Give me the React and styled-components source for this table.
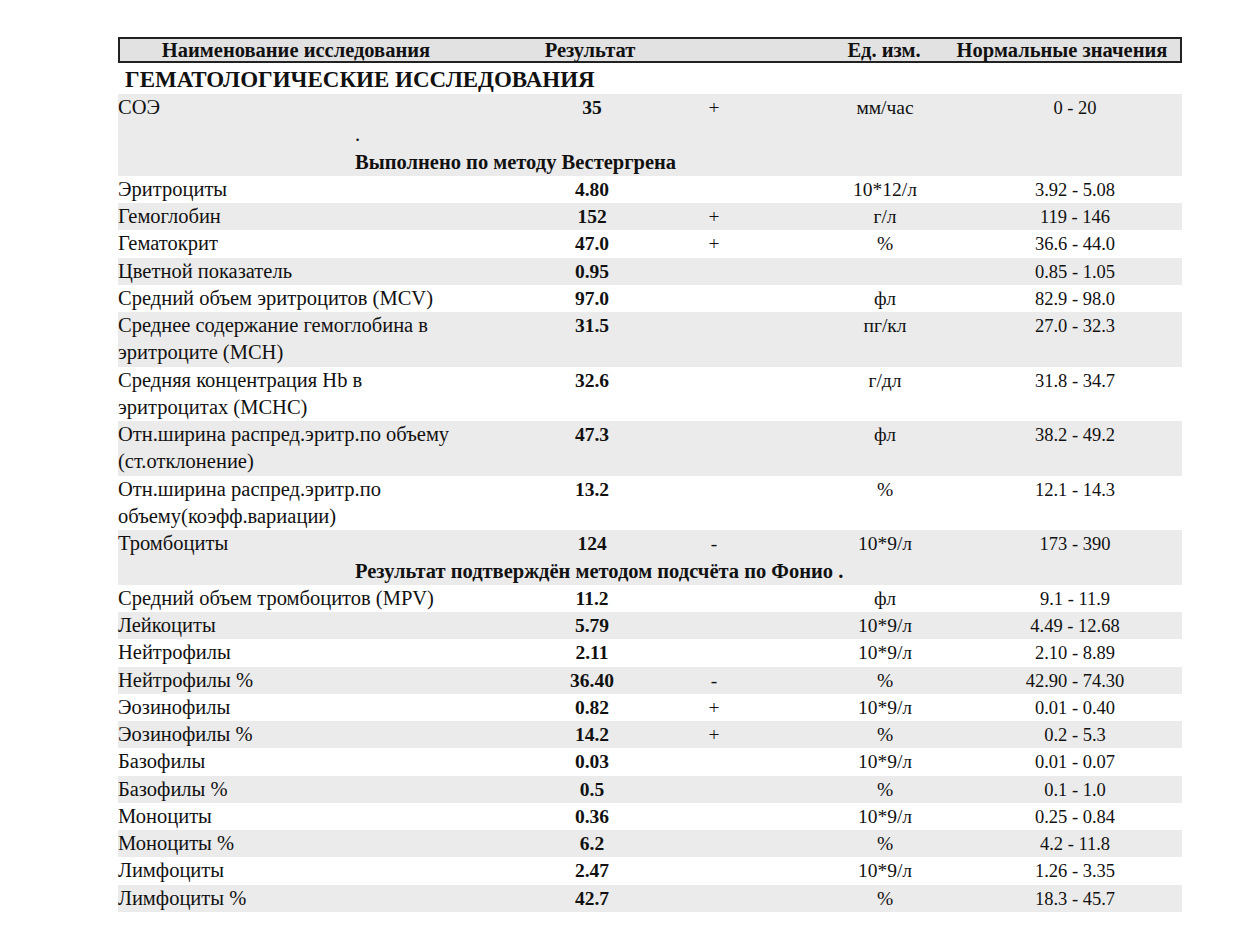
import React from "react";
import styled, { createGlobalStyle } from "styled-components";

const GlobalStyle = createGlobalStyle`
  body {
    margin: 0;
    background: #fff;
    font-family: "Liberation Serif", "Times New Roman", serif;
    color: #111;
  }
`;

const Page = styled.div`
  padding: 37px 58px 30px 118px;
  width: 1064px;
`;

const Header = styled.div`
  display: grid;
  grid-template-columns: 352px 236px 116px 120px 1fr;
  border: 2px solid #222;
  background: #e2e2e2;
  height: 22px;
  align-items: center;
  font-weight: bold;
  font-size: 20.5px;
`;

const HeadCell = styled.div`
  text-align: center;
  white-space: nowrap;
`;

const Section = styled.div`
  font-weight: bold;
  font-size: 23px;
  padding-left: 7px;
  line-height: 28px;
  margin-top: 3px;
`;

const Row = styled.div`
  display: grid;
  grid-template-columns: 400px 148px 96px 246px 134px 1fr;
  align-items: start;
  background: ${(p) => (p.$shaded ? "#ebebeb" : "#fff")};
  font-size: 20.5px;
  line-height: 27.27px;
`;

const Name = styled.div`
  white-space: pre-line;
`;

const Cell = styled.div`
  text-align: center;
`;

const Text = styled.span`
  font-size: ${(p) => p.$size || "19.5px"};
  font-weight: ${(p) => (p.$bold ? "bold" : "normal")};
  line-height: 1;
`;

const Note = styled.div`
  grid-column: 1 / -1;
  padding-left: 237px;
  font-weight: ${(p) => (p.$bold ? "bold" : "normal")};
`;

const rows = [
  { name: "СОЭ", value: "35", flag: "+", unit: "мм/час", norm: "0 - 20", notes: [".", "Выполнено по методу Вестергрена"] },
  { name: "Эритроциты", value: "4.80", unit: "10*12/л", norm: "3.92 - 5.08" },
  { name: "Гемоглобин", value: "152", flag: "+", unit: "г/л", norm: "119 - 146" },
  { name: "Гематокрит", value: "47.0", flag: "+", unit: "%", norm: "36.6 - 44.0" },
  { name: "Цветной показатель", value: "0.95", unit: "", norm: "0.85 - 1.05" },
  { name: "Средний объем эритроцитов (MCV)", value: "97.0", unit: "фл", norm: "82.9 - 98.0" },
  { name: "Среднее содержание гемоглобина в\nэритроците (МСН)", value: "31.5", unit: "пг/кл", norm: "27.0 - 32.3" },
  { name: "Средняя концентрация Hb в\nэритроцитах (MCHC)", value: "32.6", unit: "г/дл", norm: "31.8 - 34.7" },
  { name: "Отн.ширина распред.эритр.по объему\n(ст.отклонение)", value: "47.3", unit: "фл", norm: "38.2 - 49.2" },
  { name: "Отн.ширина распред.эритр.по\nобъему(коэфф.вариации)", value: "13.2", unit: "%", norm: "12.1 - 14.3" },
  { name: "Тромбоциты", value: "124", flag: "-", unit: "10*9/л", norm: "173 - 390", notes: ["Результат подтверждён методом подсчёта по Фонио ."] },
  { name: "Средний объем тромбоцитов (MPV)", value: "11.2", unit: "фл", norm: "9.1 - 11.9" },
  { name: "Лейкоциты", value: "5.79", unit: "10*9/л", norm: "4.49 - 12.68" },
  { name: "Нейтрофилы", value: "2.11", unit: "10*9/л", norm: "2.10 - 8.89" },
  { name: "Нейтрофилы %", value: "36.40", flag: "-", unit: "%", norm: "42.90 - 74.30" },
  { name: "Эозинофилы", value: "0.82", flag: "+", unit: "10*9/л", norm: "0.01 - 0.40" },
  { name: "Эозинофилы %", value: "14.2", flag: "+", unit: "%", norm: "0.2 - 5.3" },
  { name: "Базофилы", value: "0.03", unit: "10*9/л", norm: "0.01 - 0.07" },
  { name: "Базофилы %", value: "0.5", unit: "%", norm: "0.1 - 1.0" },
  { name: "Моноциты", value: "0.36", unit: "10*9/л", norm: "0.25 - 0.84" },
  { name: "Моноциты %", value: "6.2", unit: "%", norm: "4.2 - 11.8" },
  { name: "Лимфоциты", value: "2.47", unit: "10*9/л", norm: "1.26 - 3.35" },
  { name: "Лимфоциты %", value: "42.7", unit: "%", norm: "18.3 - 45.7" },
];

export default function App() {
  return (
    <Page>
      <GlobalStyle />
      <Header>
        <HeadCell>Наименование исследования</HeadCell>
        <HeadCell>Результат</HeadCell>
        <HeadCell />
        <HeadCell>Ед. изм.</HeadCell>
        <HeadCell>Нормальные значения</HeadCell>
      </Header>
      <Section>ГЕМАТОЛОГИЧЕСКИЕ ИССЛЕДОВАНИЯ</Section>
      {rows.map((r, i) => (
        <Row key={r.name} $shaded={i % 2 === 0}>
          <Name>{r.name}</Name>
          <Cell>
            <Text $bold>{r.value}</Text>
          </Cell>
          <Cell>
            <Text>{r.flag || ""}</Text>
          </Cell>
          <Cell>
            <Text>{r.unit}</Text>
          </Cell>
          <Cell>
            <Text $size="18.5px">{r.norm}</Text>
          </Cell>
          <div />
          {r.notes &&
            r.notes.map((n) => (
              <Note key={n} $bold={n.length > 1}>
                {n}
              </Note>
            ))}
        </Row>
      ))}
    </Page>
  );
}
